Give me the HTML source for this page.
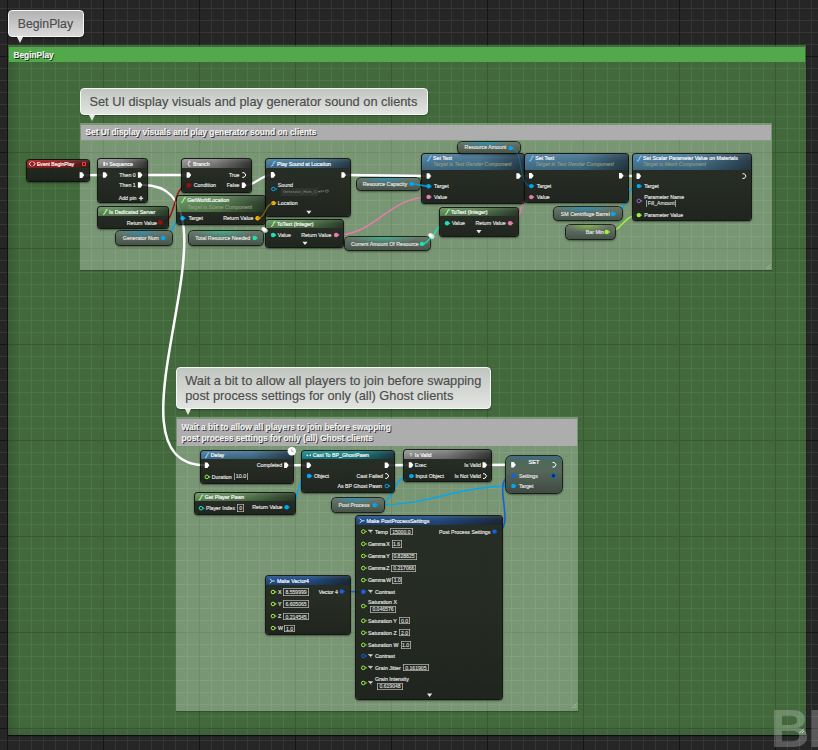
<!DOCTYPE html>
<html><head><meta charset="utf-8">
<style>
*{margin:0;padding:0;box-sizing:border-box}
html,body{width:818px;height:750px;overflow:hidden}
body{position:relative;font-family:"Liberation Sans",sans-serif;background-color:#262626;
background-image:
linear-gradient(to right,#151515 1px,transparent 1px),
linear-gradient(to bottom,#151515 1px,transparent 1px),
linear-gradient(to right,#353535 1px,transparent 1px),
linear-gradient(to bottom,#353535 1px,transparent 1px);
background-size:96px 100%,100% 96px,12px 100%,100% 12px;
background-position:7px 0,0 56px,7px 0,0 8px;}
.abs{position:absolute}
.bubble{position:absolute;border:1.3px solid #f6f6f6;border-radius:4px;background:linear-gradient(#c2c6c1,#e1e4e0);box-shadow:0 1px 2px rgba(0,0,0,.35)}
.bt{color:#4c4c4c;-webkit-text-stroke:0}
.ht{color:#f2f2f2;font-weight:bold;text-shadow:1px 1px 0 rgba(0,0,0,.75);-webkit-text-stroke:0}
.bubble:after{content:"";position:absolute;left:7.5px;bottom:-7px;border-left:3.4px solid transparent;border-right:3.4px solid transparent;border-top:6px solid #e6e8e6}
.gbox{position:absolute;left:8px;top:45px;width:798px;height:690px;background-color:#42683c;
background-image:linear-gradient(to right,#355b31 1px,transparent 1px),linear-gradient(to bottom,#355b31 1px,transparent 1px),linear-gradient(to right,#4a7546 1px,transparent 1px),linear-gradient(to bottom,#4a7546 1px,transparent 1px);
background-size:96px 100%,100% 96px,12px 100%,100% 12px;background-position:7px 0,0 56px,7px 0,0 8px;background-attachment:fixed;box-shadow:0 1px 1px rgba(0,0,0,.7)}
.gbox .hd{position:absolute;left:1px;top:2px;right:1px;height:15px;background:#52a94a;color:#f4f4f4;font-weight:bold;font-size:9px;padding:3px 0 0 4px;text-shadow:1px 1px 0 rgba(0,0,0,.6);line-height:12px}
.cbox{position:absolute;box-shadow:0 1px 1px rgba(0,0,0,.22);background-color:#799674;
background-image:linear-gradient(to right,#6f8c6a 1px,transparent 1px),linear-gradient(to bottom,#6f8c6a 1px,transparent 1px),linear-gradient(to right,#819f7d 1px,transparent 1px),linear-gradient(to bottom,#819f7d 1px,transparent 1px);
background-size:96px 100%,100% 96px,12px 100%,100% 12px;background-position:7px 0,0 56px,7px 0,0 8px;background-attachment:fixed}
.cbox .hd{position:absolute;left:1px;top:2px;right:1px;background:#adadad;color:#f2f2f2;font-weight:bold;font-size:9px;padding:3px 0 0 4px;text-shadow:1px 1px 0 rgba(0,0,0,.7);line-height:12px;white-space:nowrap}
.nd{position:absolute;border-radius:3px;background:linear-gradient(to bottom,rgba(30,34,29,.9),rgba(29,33,28,.9) 40%,rgba(24,28,23,.92));box-shadow:0 0 0 1px rgba(10,12,10,.85),0 1px 2px 1px rgba(0,0,0,.45)}
.nh{position:absolute;left:0;top:0;right:0;border-radius:3px 3px 0 0}
.pl{position:absolute;border-radius:4.5px;box-shadow:0 0 0 1px rgba(18,22,18,.85),0 1px 2px 1px rgba(0,0,0,.4)}
.t{position:absolute;white-space:nowrap;line-height:1;font-family:"Liberation Sans",sans-serif;-webkit-text-stroke:.15px currentColor}
.tt{-webkit-text-stroke:.22px currentColor}
.vb{position:absolute;white-space:nowrap;box-shadow:inset 0 0 0 .8px #b4b4b4;color:#e2e2e2;display:flex;align-items:center;justify-content:center;font-family:"Liberation Sans",sans-serif;-webkit-text-stroke:.1px currentColor}
svg.ov{position:absolute;left:0;top:0;width:818px;height:750px;overflow:visible}
.wm{position:absolute;left:770.5px;top:701px;font-size:54px;font-weight:bold;color:rgba(255,255,255,.24);letter-spacing:-1.5px;white-space:nowrap;line-height:1}
</style></head><body>

<div class="bubble" style="left:8px;top:10px;width:76px;height:27px;background:linear-gradient(#b2b2b2,#dadada)"></div>
<div class="t bt" style="left:17.7px;top:17.6px;font-size:12.3px">BeginPlay</div>

<div class="gbox"><div class="hd"></div><div style="position:absolute;left:0;top:17px;width:14px;bottom:0;background:linear-gradient(to right,rgba(0,0,0,.13),rgba(0,0,0,0))"></div><div style="position:absolute;left:0;right:0;height:10px;bottom:0;background:linear-gradient(to top,rgba(0,0,0,.08),rgba(0,0,0,0))"></div></div>
<div class="t ht" style="left:13.4px;top:50.9px;font-size:8.35px">BeginPlay</div>

<div class="bubble" style="left:80px;top:88px;width:348px;height:27px"></div>
<div class="t bt" style="left:89.4px;top:95.5px;font-size:12.8px">Set UI display visuals and play generator sound on clients</div>
<div class="cbox" style="left:80px;top:123px;width:692px;height:147px"><div class="hd" style="height:15px"></div></div>
<div class="t ht" style="left:85.5px;top:128.4px;font-size:8.35px">Set UI display visuals and play generator sound on clients</div>

<div class="bubble" style="left:176px;top:367px;width:315px;height:41.5px"></div>
<div class="t bt" style="left:185.2px;top:375.4px;font-size:12.8px">Wait a bit to allow all players to join before swapping</div>
<div class="t bt" style="left:185.2px;top:390.4px;font-size:12.8px">post process settings for only (all) Ghost clients</div>
<div class="cbox" style="left:176px;top:417px;width:402px;height:294px"><div class="hd" style="height:26.7px"></div></div>
<div class="t ht" style="left:181.5px;top:422.5px;font-size:8.35px">Wait a bit to allow all players to join before swapping</div>
<div class="t ht" style="left:181.5px;top:434px;font-size:8.35px">post process settings for only (all) Ghost clients</div>

<svg class="ov" viewBox="0 0 818 750"><path d="M84,175.1 L103,175" fill="none" stroke="#ffffff" stroke-width="2.4"/>
<path d="M142.5,175 L187,175" fill="none" stroke="#ffffff" stroke-width="2.4"/>
<path d="M142.5,185 C254.5,185 93,465.2 205,465.2" fill="none" stroke="#ffffff" stroke-width="2.5"/>
<path d="M246,185.2 C254,185.2 263,174.9 271,174.9" fill="none" stroke="#ffffff" stroke-width="2.4"/>
<path d="M346,175 C366,175 407,176 427,176" fill="none" stroke="#ffffff" stroke-width="2.4"/>
<path d="M520,176 L529,175.8" fill="none" stroke="#ffffff" stroke-width="2.4"/>
<path d="M623,175.8 L637,176.1" fill="none" stroke="#ffffff" stroke-width="2.4"/>
<path d="M160.2,222.6 C178.2,222.6 170.7,185.2 188.7,185.2" fill="none" stroke="#a00d0d" stroke-width="1.5"/>
<path d="M163,238 C173,238 172.5,218.3 182.5,218.3" fill="none" stroke="#00a8f2" stroke-width="1.5"/>
<path d="M254.7,238 C262.7,238 265.1,235 273.1,235" fill="none" stroke="#1ee3b1" stroke-width="1.5"/>
<path d="M336.1,235 C376.1,235 388.6,196.9 428.6,196.9" fill="none" stroke="#e87aae" stroke-width="1.5"/>
<path d="M411.5,183.9 C419.5,183.9 420.6,186.2 428.6,186.2" fill="none" stroke="#00a8f2" stroke-width="1.5"/>
<path d="M421.9,243.9 C435.9,243.9 433,223.2 447,223.2" fill="none" stroke="#1ee3b1" stroke-width="1.5"/>
<path d="M510.1,223.2 C524.1,223.2 517.2,197.1 531.2,197.1" fill="none" stroke="#e87aae" stroke-width="1.5"/>
<path d="M510.7,148.1 C524.7,148.1 517.2,186.1 531.2,186.1" fill="none" stroke="#00a8f2" stroke-width="1.5"/>
<path d="M613,214 C629,214 622.8,186.1 638.8,186.1" fill="none" stroke="#00a8f2" stroke-width="1.5"/>
<path d="M606.7,232 C622.7,232 622.8,215.1 638.8,215.1" fill="none" stroke="#9ef23d" stroke-width="1.5"/>
<path d="M288.5,465.2 L306.7,465.2" fill="none" stroke="#ffffff" stroke-width="2.4"/>
<path d="M389,465.2 L408.8,465" fill="none" stroke="#ffffff" stroke-width="2.4"/>
<path d="M487,465 L511.2,464.8" fill="none" stroke="#ffffff" stroke-width="2.4"/>
<path d="M286.6,507.3 C300.6,507.3 295,476 309,476" fill="none" stroke="#00a8f2" stroke-width="1.5"/>
<path d="M374.7,505.1 C396.7,505.1 389.2,476.1 411.2,476.1" fill="none" stroke="#00a8f2" stroke-width="1.5"/>
<path d="M374.7,505.1 C434.7,505.1 453.29999999999995,486 513.3,486" fill="none" stroke="#00a8f2" stroke-width="1.5"/>
<path d="M494.4,531.6 C520.4,531.6 487.29999999999995,475.8 513.3,475.8" fill="none" stroke="#1662d6" stroke-width="1.6"/>
<path d="M341.7,591.5 L363.3,591.8" fill="none" stroke="#1662d6" stroke-width="1.5"/></svg>
<div class="nd" style="left:26.5px;top:159.5px;width:62.0px;height:21.2px"><div class="nh" style="height:8.5px;background:linear-gradient(to bottom,rgba(255,255,255,.10),rgba(0,0,0,0) 40%,rgba(0,0,0,.15)),linear-gradient(to right,#a51d1d 0%,#9a1c1c 45%,#3a2020 100%)"></div></div>
<div class="nd" style="left:98.4px;top:159.4px;width:48.3px;height:43.1px"><div class="nh" style="height:8.8px;background:linear-gradient(to bottom,rgba(255,255,255,.14),rgba(0,0,0,0) 40%,rgba(0,0,0,.18)),linear-gradient(to right,#939393 0%,#7b7b7b 50%,#353735 100%)"></div></div>
<div class="nd" style="left:98.2px;top:207.3px;width:70.3px;height:20.8px"><div class="nh" style="height:8.7px;background:linear-gradient(to bottom,rgba(255,255,255,.10),rgba(0,0,0,0) 40%,rgba(0,0,0,.18)),linear-gradient(to right,#66925f 0%,#5a8354 45%,#2d3f2c 100%)"></div></div>
<div class="nd" style="left:182.3px;top:159.4px;width:68.4px;height:32.2px"><div class="nh" style="height:8.4px;background:linear-gradient(to bottom,rgba(255,255,255,.14),rgba(0,0,0,0) 40%,rgba(0,0,0,.18)),linear-gradient(to right,#939393 0%,#7b7b7b 50%,#353735 100%)"></div></div>
<div class="nd" style="left:176.7px;top:195.6px;width:88.7px;height:28.0px"><div class="nh" style="height:16.3px;background:linear-gradient(to bottom,rgba(255,255,255,.10),rgba(0,0,0,0) 40%,rgba(0,0,0,.18)),linear-gradient(to right,#66925f 0%,#5a8354 45%,#2d3f2c 100%)"></div></div>
<div class="nd" style="left:266.4px;top:159.4px;width:83.2px;height:57.0px"><div class="nh" style="height:8.5px;background:linear-gradient(to bottom,rgba(255,255,255,.10),rgba(0,0,0,0) 40%,rgba(0,0,0,.18)),linear-gradient(to right,#4d7c9b 0%,#46738f 55%,#283d4b 100%)"></div></div>
<div class="nd" style="left:266.4px;top:219.6px;width:76.6px;height:27.9px"><div class="nh" style="height:8.6px;background:linear-gradient(to bottom,rgba(255,255,255,.10),rgba(0,0,0,0) 40%,rgba(0,0,0,.18)),linear-gradient(to right,#66925f 0%,#5a8354 45%,#2d3f2c 100%)"></div></div>
<div class="nd" style="left:422.4px;top:153.5px;width:101.9px;height:49.3px"><div class="nh" style="height:16.6px;background:linear-gradient(to bottom,rgba(255,255,255,.10),rgba(0,0,0,0) 40%,rgba(0,0,0,.18)),linear-gradient(to right,#4d7c9b 0%,#46738f 55%,#283d4b 100%)"></div></div>
<div class="nd" style="left:440.3px;top:207.5px;width:77.4px;height:28.1px"><div class="nh" style="height:8.5px;background:linear-gradient(to bottom,rgba(255,255,255,.10),rgba(0,0,0,0) 40%,rgba(0,0,0,.18)),linear-gradient(to right,#66925f 0%,#5a8354 45%,#2d3f2c 100%)"></div></div>
<div class="nd" style="left:524.6px;top:153.5px;width:103.1px;height:48.8px"><div class="nh" style="height:16.5px;background:linear-gradient(to bottom,rgba(255,255,255,.10),rgba(0,0,0,0) 40%,rgba(0,0,0,.18)),linear-gradient(to right,#4d7c9b 0%,#46738f 55%,#283d4b 100%)"></div></div>
<div class="nd" style="left:632.5px;top:153.6px;width:118.2px;height:66.7px"><div class="nh" style="height:16.3px;background:linear-gradient(to bottom,rgba(255,255,255,.10),rgba(0,0,0,0) 40%,rgba(0,0,0,.18)),linear-gradient(to right,#4d7c9b 0%,#46738f 55%,#283d4b 100%)"></div></div>
<div class="pl" style="left:116.0px;top:230.8px;width:55.8px;height:13.8px;background:radial-gradient(ellipse 23px 7.6px at 45% 0,#00a8f280,#00a8f200),linear-gradient(to bottom,#6a786c 0,#5b695d 45%,#465349 100%)"></div>
<div class="pl" style="left:188.7px;top:231.0px;width:74.8px;height:13.6px;background:radial-gradient(ellipse 31px 7.5px at 45% 0,#1ee3b180,#1ee3b100),linear-gradient(to bottom,#6a786c 0,#5b695d 45%,#465349 100%)"></div>
<div class="pl" style="left:356.5px;top:178.0px;width:63.8px;height:12.0px;background:radial-gradient(ellipse 27px 6.6px at 45% 0,#00a8f280,#00a8f200),linear-gradient(to bottom,#6a786c 0,#5b695d 45%,#465349 100%)"></div>
<div class="pl" style="left:344.8px;top:237.3px;width:85.2px;height:12.6px;background:radial-gradient(ellipse 36px 6.9px at 45% 0,#1ee3b180,#1ee3b100),linear-gradient(to bottom,#6a786c 0,#5b695d 45%,#465349 100%)"></div>
<div class="pl" style="left:458.3px;top:141.5px;width:61.7px;height:11.4px;background:radial-gradient(ellipse 26px 6.3px at 45% 0,#00a8f280,#00a8f200),linear-gradient(to bottom,#6a786c 0,#5b695d 45%,#465349 100%)"></div>
<div class="pl" style="left:554.0px;top:206.9px;width:67.9px;height:13.6px;background:radial-gradient(ellipse 29px 7.5px at 45% 0,#00a8f280,#00a8f200),linear-gradient(to bottom,#6a786c 0,#5b695d 45%,#465349 100%)"></div>
<div class="pl" style="left:566.1px;top:225.0px;width:49.4px;height:13.6px;background:radial-gradient(ellipse 21px 7.5px at 45% 0,#9ef23d80,#9ef23d00),linear-gradient(to bottom,#6a786c 0,#5b695d 45%,#465349 100%)"></div>
<div class="nd" style="left:200.5px;top:450.7px;width:92.4px;height:32.6px"><div class="nh" style="height:8.4px;background:linear-gradient(to bottom,rgba(255,255,255,.10),rgba(0,0,0,0) 40%,rgba(0,0,0,.18)),linear-gradient(to right,#4d7c9b 0%,#46738f 55%,#283d4b 100%)"></div></div>
<div class="nd" style="left:194.7px;top:492.8px;width:99.9px;height:21.5px"><div class="nh" style="height:8.0px;background:linear-gradient(to bottom,rgba(255,255,255,.10),rgba(0,0,0,0) 40%,rgba(0,0,0,.18)),linear-gradient(to right,#66925f 0%,#5a8354 45%,#2d3f2c 100%)"></div></div>
<div class="nd" style="left:302.3px;top:450.7px;width:91.5px;height:41.8px"><div class="nh" style="height:8.4px;background:linear-gradient(to bottom,rgba(255,255,255,.10),rgba(0,0,0,0) 40%,rgba(0,0,0,.18)),linear-gradient(to right,#1f8b91 0%,#1c8086 60%,#1b3d41 100%)"></div></div>
<div class="nd" style="left:404.4px;top:450.4px;width:87.0px;height:31.0px"><div class="nh" style="height:8.8px;background:linear-gradient(to bottom,rgba(255,255,255,.14),rgba(0,0,0,0) 40%,rgba(0,0,0,.18)),linear-gradient(to right,#939393 0%,#7b7b7b 50%,#353735 100%)"></div></div>
<div class="pl" style="left:506px;top:455.9px;width:55.7px;height:37px;border-radius:6px;background:linear-gradient(to bottom,#3e6a8a 0,#4c6a58 5px,#56675a 40%,#3f4a42 100%)"></div>
<div class="pl" style="left:332.3px;top:498.1px;width:51.5px;height:13.5px;background:radial-gradient(ellipse 22px 7.4px at 45% 0,#00a8f280,#00a8f200),linear-gradient(to bottom,#6a786c 0,#5b695d 45%,#465349 100%)"></div>
<div class="nd" style="left:356.3px;top:516.4px;width:146.1px;height:182.9px"><div class="nh" style="height:8.3px;background:linear-gradient(to bottom,rgba(255,255,255,.10),rgba(0,0,0,0) 40%,rgba(0,0,0,.18)),linear-gradient(to right,#24508a 0%,#234c82 55%,#1c2a3a 100%)"></div></div>
<div class="nd" style="left:266.3px;top:576.4px;width:83.4px;height:58.1px"><div class="nh" style="height:8.5px;background:linear-gradient(to bottom,rgba(255,255,255,.10),rgba(0,0,0,0) 40%,rgba(0,0,0,.18)),linear-gradient(to right,#24508a 0%,#234c82 55%,#1c2a3a 100%)"></div></div>
<svg class="ov" viewBox="0 0 818 750"><path d="M31.3,161.5 L29,163.9 L31.3,166.3 M33,161.5 L35.3,163.9 L33,166.3" fill="none" stroke="#eee" stroke-width="1"/>
<polygon points="79.60,172.30 82.20,172.30 84.20,175.10 82.20,177.90 79.60,177.90" fill="#fff"/>
<rect x="103.3" y="161.8" width="1.6" height="4.2" fill="#eee"/><rect x="105.4" y="162.6" width="2.6" height="2.8" fill="#ccc"/>
<polygon points="102.90,172.20 105.50,172.20 107.50,175.00 105.50,177.80 102.90,177.80" fill="#fff"/>
<polygon points="137.90,172.20 140.50,172.20 142.50,175.00 140.50,177.80 137.90,177.80" fill="#fff"/>
<polygon points="137.90,182.20 140.50,182.20 142.50,185.00 140.50,187.80 137.90,187.80" fill="#fff"/>
<path d="M141,196.1 V200.5 M138.8,198.3 H143.2" stroke="#fff" stroke-width="1.1"/>
<path d="M103.0,214.5 C104.6,214.5 105.0,213.0 105.3,212.0 C105.6,211.0 106.0,209.5 107.6,209.5" fill="none" stroke="#a6f08a" stroke-width="1.3"/>
<circle cx="160.20" cy="222.60" r="2.2" fill="#a00d0d"/><polygon points="162.10,221.40 163.50,222.60 162.10,223.80" fill="#a00d0d"/>
<path d="M190.5,161.6 A2.3,2.3 0 1 0 190.5,166.2" fill="none" stroke="#eee" stroke-width=".9"/><path d="M188.2,161.2 L189.6,160.6 L189.5,162.2Z" fill="#eee"/>
<polygon points="186.60,172.20 189.20,172.20 191.20,175.00 189.20,177.80 186.60,177.80" fill="#fff"/>
<polyline points="242.30,172.70 244.20,172.70 245.80,175.00 244.20,177.30 242.30,177.30" fill="none" stroke="#fff" stroke-width="1"/>
<circle cx="188.70" cy="185.20" r="2.2" fill="#a00d0d"/><polygon points="190.60,184.00 192.00,185.20 190.60,186.40" fill="#a00d0d"/>
<polygon points="241.80,182.40 244.40,182.40 246.40,185.20 244.40,188.00 241.80,188.00" fill="#fff"/>
<path d="M181.2,202.5 C182.8,202.5 183.2,201.0 183.5,200.0 C183.8,199.0 184.2,197.5 185.8,197.5" fill="none" stroke="#a6f08a" stroke-width="1.3"/>
<circle cx="182.50" cy="218.30" r="2.2" fill="#00a8f2"/><polygon points="184.40,217.10 185.80,218.30 184.40,219.50" fill="#00a8f2"/>
<circle cx="257.50" cy="218.30" r="2.2" fill="#f2b705"/><polygon points="259.40,217.10 260.80,218.30 259.40,219.50" fill="#f2b705"/>
<path d="M271.0,166.3 C272.6,166.3 273.0,164.8 273.3,163.8 C273.6,162.8 274.0,161.3 275.6,161.3" fill="none" stroke="#72c8ff" stroke-width="1.3"/>
<polygon points="270.90,172.10 273.50,172.10 275.50,174.90 273.50,177.70 270.90,177.70" fill="#fff"/>
<polygon points="341.40,172.20 344.00,172.20 346.00,175.00 344.00,177.80 341.40,177.80" fill="#fff"/>
<circle cx="273.40" cy="189.00" r="1.8" fill="none" stroke="#00a8f2" stroke-width="1"/><polygon points="275.80,187.80 277.10,189.00 275.80,190.20" fill="#00a8f2"/>
<circle cx="273.40" cy="203.10" r="2.2" fill="#f2b705"/><polygon points="275.30,201.90 276.70,203.10 275.30,204.30" fill="#f2b705"/>
<polygon points="306.30,210.70 311.50,210.70 308.90,214.10" fill="#e8e8e8"/>
<path d="M271.0,226.5 C272.6,226.5 273.0,225.0 273.3,224.0 C273.6,223.0 274.0,221.5 275.6,221.5" fill="none" stroke="#a6f08a" stroke-width="1.3"/>
<circle cx="273.10" cy="235.00" r="2.2" fill="#1ee3b1"/><polygon points="275.00,233.80 276.40,235.00 275.00,236.20" fill="#1ee3b1"/>
<circle cx="336.10" cy="235.00" r="2.2" fill="#e87aae"/><polygon points="338.00,233.80 339.40,235.00 338.00,236.20" fill="#e87aae"/>
<polygon points="302.40,241.70 307.60,241.70 305.00,245.10" fill="#e8e8e8"/>
<path d="M427.1,160.8 C428.7,160.8 429.1,159.4 429.4,158.4 C429.7,157.4 430.1,155.9 431.7,155.9" fill="none" stroke="#72c8ff" stroke-width="1.3"/>
<polygon points="426.60,173.20 429.20,173.20 431.20,176.00 429.20,178.80 426.60,178.80" fill="#fff"/>
<polygon points="516.40,173.20 519.00,173.20 521.00,176.00 519.00,178.80 516.40,178.80" fill="#fff"/>
<circle cx="428.60" cy="186.20" r="2.2" fill="#00a8f2"/><polygon points="430.50,185.00 431.90,186.20 430.50,187.40" fill="#00a8f2"/>
<circle cx="428.60" cy="196.90" r="2.2" fill="#e87aae"/><polygon points="430.50,195.70 431.90,196.90 430.50,198.10" fill="#e87aae"/>
<path d="M445.0,214.5 C446.6,214.5 447.0,213.0 447.3,212.0 C447.6,211.0 448.0,209.5 449.6,209.5" fill="none" stroke="#a6f08a" stroke-width="1.3"/>
<circle cx="447.00" cy="223.20" r="2.2" fill="#1ee3b1"/><polygon points="448.90,222.00 450.30,223.20 448.90,224.40" fill="#1ee3b1"/>
<circle cx="510.10" cy="223.20" r="2.2" fill="#e87aae"/><polygon points="512.00,222.00 513.40,223.20 512.00,224.40" fill="#e87aae"/>
<polygon points="476.30,230.10 481.50,230.10 478.90,233.50" fill="#e8e8e8"/>
<path d="M529.3,160.8 C530.9,160.8 531.3,159.4 531.6,158.4 C531.9,157.4 532.3,155.9 533.9,155.9" fill="none" stroke="#72c8ff" stroke-width="1.3"/>
<polygon points="529.00,173.00 531.60,173.00 533.60,175.80 531.60,178.60 529.00,178.60" fill="#fff"/>
<polygon points="619.00,173.00 621.60,173.00 623.60,175.80 621.60,178.60 619.00,178.60" fill="#fff"/>
<circle cx="531.20" cy="186.10" r="2.2" fill="#00a8f2"/><polygon points="533.10,184.90 534.50,186.10 533.10,187.30" fill="#00a8f2"/>
<circle cx="531.20" cy="197.10" r="2.2" fill="#e87aae"/><polygon points="533.10,195.90 534.50,197.10 533.10,198.30" fill="#e87aae"/>
<path d="M637.1,161.0 C638.7,161.0 639.1,159.5 639.4,158.5 C639.7,157.5 640.1,156.0 641.7,156.0" fill="none" stroke="#72c8ff" stroke-width="1.3"/>
<polygon points="636.50,173.30 639.10,173.30 641.10,176.10 639.10,178.90 636.50,178.90" fill="#fff"/>
<polyline points="742.50,173.80 744.40,173.80 746.00,176.10 744.40,178.40 742.50,178.40" fill="none" stroke="#fff" stroke-width="1"/>
<circle cx="638.80" cy="186.10" r="2.2" fill="#00a8f2"/><polygon points="640.70,184.90 642.10,186.10 640.70,187.30" fill="#00a8f2"/>
<circle cx="638.80" cy="200.90" r="1.8" fill="none" stroke="#b45ee6" stroke-width="1"/><polygon points="641.20,199.70 642.50,200.90 641.20,202.10" fill="#b45ee6"/>
<circle cx="638.80" cy="215.10" r="2.2" fill="#9ef23d"/><polygon points="640.70,213.90 642.10,215.10 640.70,216.30" fill="#9ef23d"/>
<circle cx="163.00" cy="238.00" r="2.2" fill="#00a8f2"/><polygon points="164.90,236.80 166.30,238.00 164.90,239.20" fill="#00a8f2"/>
<circle cx="254.70" cy="238.00" r="2.2" fill="#1ee3b1"/><polygon points="256.60,236.80 258.00,238.00 256.60,239.20" fill="#1ee3b1"/>
<circle cx="411.50" cy="183.90" r="2.2" fill="#00a8f2"/><polygon points="413.40,182.70 414.80,183.90 413.40,185.10" fill="#00a8f2"/>
<circle cx="421.90" cy="243.90" r="2.2" fill="#1ee3b1"/><polygon points="423.80,242.70 425.20,243.90 423.80,245.10" fill="#1ee3b1"/>
<circle cx="510.70" cy="148.10" r="2.2" fill="#00a8f2"/><polygon points="512.60,146.90 514.00,148.10 512.60,149.30" fill="#00a8f2"/>
<circle cx="613.00" cy="214.00" r="2.2" fill="#00a8f2"/><polygon points="614.90,212.80 616.30,214.00 614.90,215.20" fill="#00a8f2"/>
<circle cx="606.70" cy="232.00" r="2.2" fill="#9ef23d"/><polygon points="608.60,230.80 610.00,232.00 608.60,233.20" fill="#9ef23d"/>
<path d="M204.8,457.7 C206.4,457.7 206.8,456.2 207.1,455.2 C207.4,454.2 207.8,452.7 209.4,452.7" fill="none" stroke="#72c8ff" stroke-width="1.3"/>
<circle cx="291.8" cy="451.2" r="4.2" fill="#fff"/><path d="M291.8,448.8 V451.4 H293.6" stroke="#888" stroke-width=".7" fill="none"/>
<polygon points="204.80,462.40 207.40,462.40 209.40,465.20 207.40,468.00 204.80,468.00" fill="#fff"/>
<polygon points="284.10,462.40 286.70,462.40 288.70,465.20 286.70,468.00 284.10,468.00" fill="#fff"/>
<circle cx="206.80" cy="476.90" r="1.8" fill="none" stroke="#9ef23d" stroke-width="1"/><polygon points="209.20,475.70 210.50,476.90 209.20,478.10" fill="#9ef23d"/>
<path d="M198.8,499.8 C200.4,499.8 200.8,498.3 201.1,497.3 C201.4,496.3 201.8,494.8 203.4,494.8" fill="none" stroke="#a6f08a" stroke-width="1.3"/>
<circle cx="201.00" cy="508.20" r="1.8" fill="none" stroke="#1ee3b1" stroke-width="1"/><polygon points="203.40,507.00 204.70,508.20 203.40,509.40" fill="#1ee3b1"/>
<circle cx="286.60" cy="507.30" r="2.2" fill="#00a8f2"/><polygon points="288.50,506.10 289.90,507.30 288.50,508.50" fill="#00a8f2"/>
<circle cx="307.4" cy="455.4" r=".9" fill="#eee"/><path d="M309.2,455.6 L311,453.8 L311,456.6 Z" fill="#eee"/>
<polygon points="306.70,462.40 309.30,462.40 311.30,465.20 309.30,468.00 306.70,468.00" fill="#fff"/>
<polygon points="384.70,462.40 387.30,462.40 389.30,465.20 387.30,468.00 384.70,468.00" fill="#fff"/>
<circle cx="309.00" cy="476.00" r="2.2" fill="#00a8f2"/><polygon points="310.90,474.80 312.30,476.00 310.90,477.20" fill="#00a8f2"/>
<polyline points="385.20,473.70 387.10,473.70 388.70,476.00 387.10,478.30 385.20,478.30" fill="none" stroke="#fff" stroke-width="1"/>
<circle cx="386.80" cy="486.00" r="1.8" fill="none" stroke="#00a8f2" stroke-width="1"/><polygon points="389.20,484.80 390.50,486.00 389.20,487.20" fill="#00a8f2"/>
<polygon points="408.80,462.20 411.40,462.20 413.40,465.00 411.40,467.80 408.80,467.80" fill="#fff"/>
<polygon points="482.50,462.20 485.10,462.20 487.10,465.00 485.10,467.80 482.50,467.80" fill="#fff"/>
<circle cx="411.20" cy="476.10" r="2.2" fill="#00a8f2"/><polygon points="413.10,474.90 414.50,476.10 413.10,477.30" fill="#00a8f2"/>
<polyline points="483.00,473.80 484.90,473.80 486.50,476.10 484.90,478.40 483.00,478.40" fill="none" stroke="#fff" stroke-width="1"/>
<polygon points="511.20,462.00 513.80,462.00 515.80,464.80 513.80,467.60 511.20,467.60" fill="#fff"/>
<polyline points="552.50,462.50 554.40,462.50 556.00,464.80 554.40,467.10 552.50,467.10" fill="none" stroke="#fff" stroke-width="1"/>
<circle cx="513.30" cy="475.80" r="2.2" fill="#1662d6"/><polygon points="515.20,474.60 516.60,475.80 515.20,477.00" fill="#1662d6"/>
<circle cx="553.4" cy="475.8" r="2.2" fill="#10305a" stroke="#1662d6" stroke-width="1"/>
<circle cx="513.30" cy="486.00" r="2.2" fill="#00a8f2"/><polygon points="515.20,484.80 516.60,486.00 515.20,487.20" fill="#00a8f2"/>
<circle cx="374.70" cy="505.10" r="2.2" fill="#00a8f2"/><polygon points="376.60,503.90 378.00,505.10 376.60,506.30" fill="#00a8f2"/>
<path d="M359.6,518.6 L362.2,520.8 L359.6,523 M362.2,520.8 H364.6" stroke="#eee" stroke-width=".9" fill="none"/>
<circle cx="494.40" cy="531.60" r="2.2" fill="#1662d6"/><polygon points="496.30,530.40 497.70,531.60 496.30,532.80" fill="#1662d6"/>
<circle cx="363.30" cy="531.60" r="1.8" fill="none" stroke="#9ef23d" stroke-width="1"/><polygon points="365.70,530.40 367.00,531.60 365.70,532.80" fill="#9ef23d"/>
<path d="M368.3,530.0 L372.7,530.3 L370.7,531.8 Z M369.0,530.1 L371.3,533.4" fill="#e0e0e0" stroke="#e0e0e0" stroke-width=".5"/>
<circle cx="363.30" cy="543.90" r="1.8" fill="none" stroke="#9ef23d" stroke-width="1"/><polygon points="365.70,542.70 367.00,543.90 365.70,545.10" fill="#9ef23d"/>
<circle cx="363.30" cy="556.00" r="1.8" fill="none" stroke="#9ef23d" stroke-width="1"/><polygon points="365.70,554.80 367.00,556.00 365.70,557.20" fill="#9ef23d"/>
<circle cx="363.30" cy="568.10" r="1.8" fill="none" stroke="#9ef23d" stroke-width="1"/><polygon points="365.70,566.90 367.00,568.10 365.70,569.30" fill="#9ef23d"/>
<circle cx="363.30" cy="580.10" r="1.8" fill="none" stroke="#9ef23d" stroke-width="1"/><polygon points="365.70,578.90 367.00,580.10 365.70,581.30" fill="#9ef23d"/>
<circle cx="363.30" cy="620.80" r="1.8" fill="none" stroke="#9ef23d" stroke-width="1"/><polygon points="365.70,619.60 367.00,620.80 365.70,622.00" fill="#9ef23d"/>
<circle cx="363.30" cy="632.80" r="1.8" fill="none" stroke="#9ef23d" stroke-width="1"/><polygon points="365.70,631.60 367.00,632.80 365.70,634.00" fill="#9ef23d"/>
<circle cx="363.30" cy="644.90" r="1.8" fill="none" stroke="#9ef23d" stroke-width="1"/><polygon points="365.70,643.70 367.00,644.90 365.70,646.10" fill="#9ef23d"/>
<circle cx="363.30" cy="667.80" r="1.8" fill="none" stroke="#9ef23d" stroke-width="1"/><polygon points="365.70,666.60 367.00,667.80 365.70,669.00" fill="#9ef23d"/>
<path d="M368.3,666.2 L372.7,666.5 L370.7,668.0 Z M369.0,666.3 L371.3,669.6" fill="#e0e0e0" stroke="#e0e0e0" stroke-width=".5"/>
<circle cx="363.30" cy="591.80" r="2.2" fill="#1662d6"/><polygon points="365.20,590.60 366.60,591.80 365.20,593.00" fill="#1662d6"/>
<path d="M368.3,590.2 L372.7,590.5 L370.7,592.0 Z M369.0,590.3 L371.3,593.6" fill="#e0e0e0" stroke="#e0e0e0" stroke-width=".5"/>
<circle cx="363.30" cy="606.10" r="1.8" fill="none" stroke="#9ef23d" stroke-width="1"/><polygon points="365.70,604.90 367.00,606.10 365.70,607.30" fill="#9ef23d"/>
<circle cx="363.30" cy="656.00" r="1.8" fill="none" stroke="#1662d6" stroke-width="1"/><polygon points="365.70,654.80 367.00,656.00 365.70,657.20" fill="#1662d6"/>
<path d="M368.3,654.4 L372.7,654.7 L370.7,656.2 Z M369.0,654.5 L371.3,657.8" fill="#e0e0e0" stroke="#e0e0e0" stroke-width=".5"/>
<circle cx="363.30" cy="683.00" r="1.8" fill="none" stroke="#9ef23d" stroke-width="1"/><polygon points="365.70,681.80 367.00,683.00 365.70,684.20" fill="#9ef23d"/>
<path d="M368.3,681.4 L372.7,681.7 L370.7,683.2 Z M369.0,681.5 L371.3,684.8" fill="#e0e0e0" stroke="#e0e0e0" stroke-width=".5"/>
<polygon points="427.00,693.50 432.20,693.50 429.60,696.90" fill="#e8e8e8"/>
<path d="M269.8,578.8 L272.4,581 L269.8,583.2 M272.4,581 H274.8" stroke="#eee" stroke-width=".9" fill="none"/>
<circle cx="273.00" cy="592.00" r="1.8" fill="none" stroke="#9ef23d" stroke-width="1"/><polygon points="275.40,590.80 276.70,592.00 275.40,593.20" fill="#9ef23d"/>
<circle cx="273.00" cy="604.00" r="1.8" fill="none" stroke="#9ef23d" stroke-width="1"/><polygon points="275.40,602.80 276.70,604.00 275.40,605.20" fill="#9ef23d"/>
<circle cx="273.00" cy="616.10" r="1.8" fill="none" stroke="#9ef23d" stroke-width="1"/><polygon points="275.40,614.90 276.70,616.10 275.40,617.30" fill="#9ef23d"/>
<circle cx="273.00" cy="628.10" r="1.8" fill="none" stroke="#9ef23d" stroke-width="1"/><polygon points="275.40,626.90 276.70,628.10 275.40,629.30" fill="#9ef23d"/>
<circle cx="341.70" cy="591.50" r="2.2" fill="#1662d6"/><polygon points="343.60,590.30 345.00,591.50 343.60,592.70" fill="#1662d6"/>
<path d="M257.5,218.3 C266,218.3 265,203.1 273.4,203.1" fill="none" stroke="#a07c14" stroke-width="1.2" opacity=".75"/>
<path d="M510.7,148.1 C524.7,148.1 517.2,186.1 531.2,186.1" fill="none" stroke="#00a8f2" stroke-width="1.3" opacity=".3"/>
<path d="M142.5,185 C254.5,185 93,465.2 205,465.2" fill="none" stroke="#fff" stroke-width="2" opacity=".12"/>
<path d="M411.5,183.9 C418,183.9 422,186.2 428.6,186.2" fill="none" stroke="#00a8f2" stroke-width="1.5" opacity=".85"/>
<path d="M421.9,243.9 C428,243.9 431,236 431.3,236" fill="none" stroke="#1ee3b1" stroke-width="1.5" opacity=".85"/>
<ellipse cx="264.6" cy="229.8" rx="3.4" ry="2.3" fill="#d8dcd8" transform="rotate(35 264.6 229.8)"/><ellipse cx="264" cy="229.2" rx="2" ry="1.5" fill="#fff" transform="rotate(35 264 229.2)"/>
<ellipse cx="431.3" cy="236" rx="3.4" ry="2.3" fill="#d8dcd8" transform="rotate(35 431.3 236)"/><ellipse cx="430.7" cy="235.4" rx="2" ry="1.5" fill="#fff" transform="rotate(35 430.7 235.4)"/></svg>
<div class="t tt" style="left:37.00px;top:162.07px;font-size:5.05px;color:#f4f4f4;">Event BeginPlay</div>
<div style="position:absolute;left:82.3px;top:162.3px;width:3.8px;height:3.8px;border:1px solid #ff3030;background:#200"></div>
<div class="t tt" style="left:109.30px;top:161.87px;font-size:5.25px;color:#f4f4f4;">Sequence</div>
<div class="t" style="right:682.30px;top:173.17px;font-size:5.25px;color:#e6e6e6;">Then 0</div>
<div class="t" style="right:682.30px;top:183.17px;font-size:5.25px;color:#e6e6e6;">Then 1</div>
<div class="t" style="right:681.50px;top:196.37px;font-size:5.25px;color:#e6e6e6;">Add pin</div>
<div class="t tt" style="left:109.10px;top:209.57px;font-size:5.25px;color:#f4f4f4;">Is Dedicated Server</div>
<div class="t" style="right:661.00px;top:220.67px;font-size:5.25px;color:#e6e6e6;">Return Value</div>
<div class="t tt" style="left:193.00px;top:161.87px;font-size:5.25px;color:#f4f4f4;">Branch</div>
<div class="t" style="right:578.50px;top:173.07px;font-size:5.25px;color:#e6e6e6;">True</div>
<div class="t" style="left:193.80px;top:183.27px;font-size:5.25px;color:#e6e6e6;">Condition</div>
<div class="t" style="right:578.50px;top:183.27px;font-size:5.25px;color:#e6e6e6;">False</div>
<div class="t tt" style="left:187.20px;top:198.07px;font-size:5.25px;color:#f4f4f4;">GetWorldLocation</div>
<div class="t" style="left:187.20px;top:205.27px;font-size:5.25px;color:#8f9a7c;font-style:italic">Target is Scene Component</div>
<div class="t" style="left:188.40px;top:216.37px;font-size:5.25px;color:#e6e6e6;">Target</div>
<div class="t" style="right:564.60px;top:216.37px;font-size:5.25px;color:#e6e6e6;">Return Value</div>
<div class="t tt" style="left:277.00px;top:161.77px;font-size:5.25px;color:#f4f4f4;">Play Sound at Location</div>
<div class="t" style="left:277.80px;top:183.07px;font-size:5.25px;color:#e6e6e6;">Sound</div>
<div class="t" style="left:281px;top:188.2px;width:36.7px;height:7.6px;font-size:4px;line-height:7.6px;color:#8a8a8a;background:#2f342f;padding-left:2px;-webkit-text-stroke:0">Generator_Hum_C &#9662;</div>
<div class="t" style="left:320.00px;top:190.43px;font-size:4.5px;color:#777;">&#8678; &#10227;</div>
<div class="t" style="left:277.80px;top:201.17px;font-size:5.25px;color:#e6e6e6;">Location</div>
<div class="t tt" style="left:277.00px;top:222.07px;font-size:5.25px;color:#f4f4f4;">ToText (Integer)</div>
<div class="t" style="left:277.80px;top:233.07px;font-size:5.25px;color:#e6e6e6;">Value</div>
<div class="t" style="right:486.60px;top:233.07px;font-size:5.25px;color:#e6e6e6;">Return Value</div>
<div class="t tt" style="left:433.10px;top:156.07px;font-size:5.25px;color:#f4f4f4;">Set Text</div>
<div class="t" style="left:433.10px;top:162.47px;font-size:5.25px;color:#8f9a7c;font-style:italic">Target is Text Render Component</div>
<div class="t" style="left:434.10px;top:184.27px;font-size:5.25px;color:#e6e6e6;">Target</div>
<div class="t" style="left:434.10px;top:194.97px;font-size:5.25px;color:#e6e6e6;">Value</div>
<div class="t tt" style="left:451.00px;top:210.27px;font-size:5.25px;color:#f4f4f4;">ToText (Integer)</div>
<div class="t" style="left:452.00px;top:221.27px;font-size:5.25px;color:#e6e6e6;">Value</div>
<div class="t" style="right:312.30px;top:221.27px;font-size:5.25px;color:#e6e6e6;">Return Value</div>
<div class="t tt" style="left:535.30px;top:156.07px;font-size:5.25px;color:#f4f4f4;">Set Text</div>
<div class="t" style="left:535.30px;top:162.47px;font-size:5.25px;color:#8f9a7c;font-style:italic">Target is Text Render Component</div>
<div class="t" style="left:536.70px;top:184.17px;font-size:5.25px;color:#e6e6e6;">Target</div>
<div class="t" style="left:536.70px;top:195.17px;font-size:5.25px;color:#e6e6e6;">Value</div>
<div class="t tt" style="left:643.10px;top:156.37px;font-size:5.25px;color:#f4f4f4;">Set Scalar Parameter Value on Materials</div>
<div class="t" style="left:643.10px;top:162.37px;font-size:5.25px;color:#8f9a7c;font-style:italic">Target is Mesh Component</div>
<div class="t" style="left:644.20px;top:184.17px;font-size:5.25px;color:#e6e6e6;">Target</div>
<div class="t" style="left:644.20px;top:195.07px;font-size:5.25px;color:#e6e6e6;">Parameter Name</div>
<div class="vb" style="left:645.8px;top:200.4px;width:30.7px;height:6.5px;font-size:5.1px;line-height:1;box-shadow:inset .8px 0 0 #b4b4b4,inset -.8px 0 0 #b4b4b4">Fill_Amount</div>
<div class="t" style="left:644.20px;top:213.17px;font-size:5.25px;color:#e6e6e6;">Parameter Value</div>
<div class="t" style="left:122.80px;top:235.77px;font-size:5.25px;color:#e6e6e6;">Generator Num</div>
<div class="t" style="left:195.30px;top:235.87px;font-size:5.25px;color:#e6e6e6;">Total Resource Needed</div>
<div class="t" style="left:362.70px;top:182.07px;font-size:5.25px;color:#e6e6e6;">Resource Capacity</div>
<div class="t" style="left:351.00px;top:241.67px;font-size:5.25px;color:#e6e6e6;">Current Amount Of Resource</div>
<div class="t" style="left:464.60px;top:145.27px;font-size:5.25px;color:#e6e6e6;">Resource Amount</div>
<div class="t" style="left:560.80px;top:211.77px;font-size:5.25px;color:#e6e6e6;">SM Centrifuge Barrel</div>
<div class="t" style="left:585.80px;top:229.87px;font-size:5.25px;color:#e6e6e6;">Bar Min</div>
<div class="t tt" style="left:210.80px;top:453.17px;font-size:5.25px;color:#f4f4f4;">Delay</div>
<div class="t" style="right:535.90px;top:463.27px;font-size:5.25px;color:#e6e6e6;">Completed</div>
<div class="t" style="left:211.80px;top:474.97px;font-size:5.25px;color:#e6e6e6;">Duration</div>
<div class="vb" style="left:234.1px;top:473.4px;width:13.9px;height:6.8px;font-size:5.4px;line-height:1;box-shadow:inset .8px 0 0 #b4b4b4,inset -.8px 0 0 #b4b4b4">10.0</div>
<div class="t tt" style="left:204.80px;top:495.17px;font-size:5.25px;color:#f4f4f4;">Get Player Pawn</div>
<div class="t" style="left:205.90px;top:506.27px;font-size:5.25px;color:#e6e6e6;">Player Index</div>
<div class="vb" style="left:237.1px;top:504.2px;width:7.0px;height:7.7px;font-size:5.1px;line-height:1;padding-top:1.5px">0</div>
<div class="t" style="right:535.50px;top:505.37px;font-size:5.25px;color:#e6e6e6;">Return Value</div>
<div class="t tt" style="left:312.80px;top:453.07px;font-size:5.25px;color:#f4f4f4;">Cast To BP_GhostPawn</div>
<div class="t" style="left:313.90px;top:474.07px;font-size:5.25px;color:#e6e6e6;">Object</div>
<div class="t" style="right:435.00px;top:474.07px;font-size:5.25px;color:#e6e6e6;">Cast Failed</div>
<div class="t" style="right:436.00px;top:484.07px;font-size:5.25px;color:#e6e6e6;">As BP Ghost Pawn</div>
<div class="t" style="left:409.30px;top:452.87px;font-size:5.25px;color:#ddd;">?</div>
<div class="t tt" style="left:414.70px;top:452.87px;font-size:5.25px;color:#f4f4f4;">Is Valid</div>
<div class="t" style="left:414.70px;top:463.07px;font-size:5.25px;color:#e6e6e6;">Exec</div>
<div class="t" style="right:337.00px;top:463.07px;font-size:5.25px;color:#e6e6e6;">Is Valid</div>
<div class="t" style="left:415.60px;top:474.17px;font-size:5.25px;color:#e6e6e6;">Input Object</div>
<div class="t" style="right:337.00px;top:474.17px;font-size:5.25px;color:#e6e6e6;">Is Not Valid</div>
<div class="t tt" style="left:534.00px;top:460.00px;font-size:5.6px;color:#f4f4f4;transform:translateX(-50%)">SET</div>
<div class="t" style="left:518.90px;top:473.87px;font-size:5.25px;color:#e6e6e6;">Settings</div>
<div class="t" style="left:518.90px;top:484.07px;font-size:5.25px;color:#e6e6e6;">Target</div>
<div class="t" style="left:338.60px;top:502.92px;font-size:5.25px;color:#e6e6e6;">Post Process</div>
<div class="t tt" style="left:366.60px;top:518.87px;font-size:5.25px;color:#f4f4f4;">Make PostProcessSettings</div>
<div class="t" style="right:327.60px;top:529.67px;font-size:5.25px;color:#e6e6e6;">Post Process Settings</div>
<div class="t" style="left:375.00px;top:529.67px;font-size:5.25px;color:#e6e6e6;">Temp</div>
<div class="vb" style="left:390.1px;top:528.1px;width:22.5px;height:7.2px;font-size:5.1px;line-height:1;padding-top:1.5px">15000.0</div>
<div class="t" style="left:368.00px;top:541.97px;font-size:5.25px;color:#e6e6e6;letter-spacing:-.3px">Gamma X</div>
<div class="vb" style="left:391.5px;top:540.4px;width:10.3px;height:7.2px;font-size:5.1px;line-height:1;padding-top:1.5px">1.6</div>
<div class="t" style="left:368.00px;top:554.07px;font-size:5.25px;color:#e6e6e6;letter-spacing:-.3px">Gamma Y</div>
<div class="vb" style="left:391.5px;top:552.5px;width:25.0px;height:7.2px;font-size:5.1px;line-height:1;padding-top:1.5px">0.828825</div>
<div class="t" style="left:368.00px;top:566.17px;font-size:5.25px;color:#e6e6e6;letter-spacing:-.3px">Gamma Z</div>
<div class="vb" style="left:391.1px;top:564.6px;width:25.4px;height:7.2px;font-size:5.1px;line-height:1;padding-top:1.5px">0.217066</div>
<div class="t" style="left:368.00px;top:578.17px;font-size:5.25px;color:#e6e6e6;letter-spacing:-.3px">Gamma W</div>
<div class="vb" style="left:392.0px;top:576.6px;width:10.4px;height:7.2px;font-size:5.1px;line-height:1;padding-top:1.5px">1.0</div>
<div class="t" style="left:368.00px;top:618.87px;font-size:5.25px;color:#e6e6e6;">Saturation Y</div>
<div class="vb" style="left:399.3px;top:617.3px;width:10.4px;height:7.2px;font-size:5.1px;line-height:1;padding-top:1.5px">0.0</div>
<div class="t" style="left:368.00px;top:630.87px;font-size:5.25px;color:#e6e6e6;">Saturation Z</div>
<div class="vb" style="left:399.3px;top:629.3px;width:10.4px;height:7.2px;font-size:5.1px;line-height:1;padding-top:1.5px">2.0</div>
<div class="t" style="left:368.00px;top:642.97px;font-size:5.25px;color:#e6e6e6;">Saturation W</div>
<div class="vb" style="left:400.5px;top:641.4px;width:10.1px;height:7.2px;font-size:5.1px;line-height:1;padding-top:1.5px">1.0</div>
<div class="t" style="left:375.00px;top:665.87px;font-size:5.25px;color:#e6e6e6;">Grain Jitter</div>
<div class="vb" style="left:403.2px;top:664.3px;width:25.4px;height:7.2px;font-size:5.1px;line-height:1;padding-top:1.5px">0.161905</div>
<div class="t" style="left:375.00px;top:589.87px;font-size:5.25px;color:#e6e6e6;">Contrast</div>
<div class="t" style="left:368.00px;top:600.27px;font-size:5.25px;color:#e6e6e6;">Saturation X</div>
<div class="vb" style="left:370.0px;top:605.8px;width:26.0px;height:6.9px;font-size:5.1px;line-height:1;padding-top:1.5px">0.046576</div>
<div class="t" style="left:375.00px;top:654.07px;font-size:5.25px;color:#e6e6e6;">Contrast</div>
<div class="t" style="left:375.00px;top:677.17px;font-size:5.25px;color:#e6e6e6;">Grain Intensity</div>
<div class="vb" style="left:377.4px;top:682.6px;width:25.4px;height:7.0px;font-size:5.1px;line-height:1;padding-top:1.5px">0.619048</div>
<div class="t tt" style="left:276.90px;top:579.07px;font-size:5.25px;color:#f4f4f4;">Make Vector4</div>
<div class="t" style="left:277.90px;top:590.07px;font-size:5.25px;color:#e6e6e6;">X</div>
<div class="vb" style="left:283.0px;top:588.4px;width:26.1px;height:7.6px;font-size:5.1px;line-height:1;padding-top:1.5px">8.559999</div>
<div class="t" style="left:277.90px;top:602.07px;font-size:5.25px;color:#e6e6e6;">Y</div>
<div class="vb" style="left:283.0px;top:600.4px;width:26.1px;height:7.6px;font-size:5.1px;line-height:1;padding-top:1.5px">6.605065</div>
<div class="t" style="left:277.90px;top:614.17px;font-size:5.25px;color:#e6e6e6;">Z</div>
<div class="vb" style="left:283.0px;top:612.5px;width:26.1px;height:7.6px;font-size:5.1px;line-height:1;padding-top:1.5px">0.214545</div>
<div class="t" style="left:277.90px;top:626.17px;font-size:5.25px;color:#e6e6e6;">W</div>
<div class="vb" style="left:284.0px;top:624.5px;width:11.0px;height:7.6px;font-size:5.1px;line-height:1;padding-top:1.5px">1.0</div>
<div class="t" style="right:480.00px;top:589.57px;font-size:5.25px;color:#e6e6e6;">Vector 4</div>
<svg class="ov" viewBox="0 0 818 750">
<path d="M766.5,268.5 L770.5,264.5 M768.8,268.8 L770.8,266.8" stroke="rgba(235,240,235,.75)" stroke-width=".9" stroke-dasharray=".9 .6"/>
<path d="M572.5,707.5 L576.5,703.5 M574.8,707.8 L576.8,705.8" stroke="rgba(235,240,235,.75)" stroke-width=".9" stroke-dasharray=".9 .6"/>
<path d="M799.5,733 L804,728.5 M801.8,733.2 L804.2,730.8" stroke="rgba(235,240,235,.8)" stroke-width="1"/>
</svg>
<div class="wm">BLUEPRINT</div>
</body></html>
